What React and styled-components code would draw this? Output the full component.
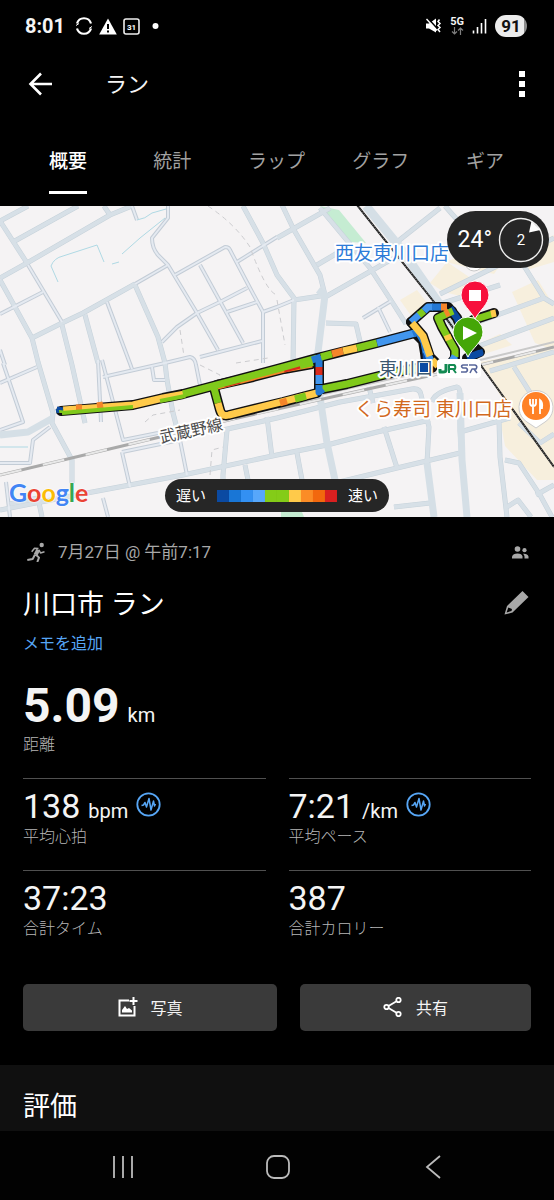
import React from "react";
import styled, { createGlobalStyle } from "styled-components";

const GlobalStyle = createGlobalStyle`
  * { box-sizing: border-box; }
  body {
    margin: 0;
    background: #000;
    color: #f4f4f4;
    font-family: Roboto, "Noto Sans CJK JP", sans-serif;
  }
  svg { display: block; flex: none; }
  button { font: inherit; color: inherit; border: 0; padding: 0; background: none; cursor: pointer; }
  h1, h2, p, dl, dd, dt { margin: 0; font-weight: inherit; }
`;

const Screen = styled.div`
  display: flex;
  flex-direction: column;
  min-height: 100vh;
`;

const StatusBar = styled.div`
  display: flex;
  align-items: center;
  justify-content: space-between;
  height: 52px;
  padding: 0 27px 0 25px;
`;

const StatusGroup = styled.div`
  display: flex;
  align-items: center;
  gap: ${(p) => p.$gap}px;
`;

const Clock = styled.span`
  font-size: 20px;
  font-weight: 700;
  line-height: 24px;
  margin-right: 4px;
`;

const Network = styled.div`
  display: flex;
  flex-direction: column;
  align-items: center;
  font-size: 11px;
  font-weight: 700;
  line-height: 10px;
`;

const Battery = styled.span`
  width: 32px;
  height: 22px;
  border-radius: 11px;
  background: linear-gradient(90deg, #ececec 91%, #8d8d8d 91%);
  color: #111;
  font-size: 17px;
  font-weight: 700;
  line-height: 22px;
  text-align: center;
`;

const AppBar = styled.header`
  display: flex;
  align-items: center;
  height: 64px;
  padding: 0 22px 0 28px;
`;

const AppTitle = styled.h1`
  flex: 1;
  margin-left: 52px;
  padding-top: 2px;
  font-size: 22px;
  line-height: 28px;
`;

const IconButton = styled.button`
  display: flex;
  align-items: center;
  justify-content: center;
`;

const Tabs = styled.nav`
  display: grid;
  grid-template-columns: repeat(5, 1fr);
  padding: 34px 17px 12px 16px;
`;

const Tab = styled.button`
  justify-self: center;
  padding-bottom: 17px;
  border-bottom: 3px solid ${(p) => (p.$active ? "#fff" : "transparent")};
  color: ${(p) => (p.$active ? "#fff" : "#a2a2a2")};
  font-size: 19px;
  font-weight: ${(p) => (p.$active ? 500 : 400)};
  line-height: 24px;
`;

const MapPanel = styled.section`
  position: relative;
  background: #f5f3f4;
`;

const MapDrawing = styled.svg`
  width: 100%;
  height: auto;
`;

const MapLabels = styled.g`
  font-family: Roboto, "Noto Sans CJK JP", sans-serif;
  paint-order: stroke;
  stroke: #fff;
  stroke-width: 4px;
  stroke-linejoin: round;
`;

const WeatherPill = styled.div`
  position: absolute;
  top: 5px;
  right: 5px;
  display: flex;
  align-items: center;
  gap: 6px;
  height: 57px;
  padding: 0 5px 0 11px;
  border-radius: 29px;
  background: #262626;
  color: #fff;
  font-size: 23px;
`;

const LegendPill = styled.div`
  position: absolute;
  bottom: 5px;
  left: 50%;
  transform: translateX(-50%);
  display: flex;
  align-items: center;
  gap: 11px;
  height: 33px;
  padding: 0 11px;
  border-radius: 17px;
  background: #262626;
  color: #fff;
  font-size: 15px;
  line-height: 20px;
  white-space: nowrap;
`;

const Scale = styled.div`
  display: flex;
`;

const Swatch = styled.span`
  width: 12px;
  height: 12px;
  background: ${(p) => p.$color};
`;

const GoogleLogo = styled.div`
  position: absolute;
  left: 9px;
  bottom: 9px;
  font-family: Lato, sans-serif;
  font-size: 25px;
  font-weight: 700;
  line-height: 32px;
  text-shadow: 0 0 2px #fff, 0 0 2px #fff;
`;

const Letter = styled.span`
  color: ${(p) => p.$color};
`;

const Summary = styled.main`
  padding: 23px 23px 34px;
`;

const MetaRow = styled.div`
  display: flex;
  align-items: center;
  height: 24px;
  padding: 0 2px 0 3px;
  color: #a8a8a8;
  font-size: 17px;
`;

const MetaText = styled.span`
  flex: 1;
  margin-left: 12px;
  line-height: 24px;
`;

const TitleRow = styled.div`
  display: flex;
  align-items: center;
  justify-content: space-between;
  height: 36px;
  margin-top: 22px;
`;

const ActivityTitle = styled.h2`
  padding-top: 2px;
  font-size: 27px;
  line-height: 36px;
  color: #fff;
`;

const NoteLink = styled.a`
  display: block;
  width: max-content;
  margin-top: 12px;
  color: #57a6f5;
  font-size: 16px;
  line-height: 20px;
  text-decoration: none;
`;

const Distance = styled.dl`
  display: flex;
  flex-direction: column-reverse;
  margin-top: 28px;
`;

const StatLabel = styled.dt`
  margin-top: ${(p) => (p.$large ? 5 : 4)}px;
  color: #b6b6b6;
  font-size: 16px;
  font-weight: 300;
  line-height: 20px;
`;

const StatValue = styled.dd`
  display: flex;
  align-items: baseline;
  gap: 8px;
  height: ${(p) => (p.$large ? 48 : 34)}px;
  font-size: ${(p) => (p.$large ? 48 : 34)}px;
  font-weight: ${(p) => (p.$large ? 700 : 400)};
  line-height: ${(p) => (p.$large ? 48 : 34)}px;
`;

const Unit = styled.span`
  font-size: 20px;
  font-weight: 400;
  line-height: 20px;
`;

const StatIcon = styled.span`
  align-self: flex-start;
  padding-top: 3px;
`;

const StatGrid = styled.dl`
  display: grid;
  grid-template-columns: 1fr 1fr;
  gap: 23px;
  margin-top: 23px;
`;

const Stat = styled.div`
  display: flex;
  flex-direction: column-reverse;
  padding-top: 10px;
  border-top: 1px solid #505050;
`;

const Actions = styled.div`
  display: grid;
  grid-template-columns: 11fr 10fr;
  gap: 23px;
  margin-top: 45px;
`;

const ActionButton = styled.button`
  display: flex;
  align-items: center;
  justify-content: center;
  gap: 13px;
  height: 47px;
  padding-bottom: 2px;
  border-radius: 5px;
  background: #3a3a3a;
  font-size: 16px;
`;

const RatingSection = styled.section`
  padding: 22px 23px 6px;
  background: #101010;
`;

const SystemNav = styled.nav`
  display: grid;
  grid-template-columns: repeat(3, 1fr);
  flex: 1;
  min-height: 69px;
  padding: 3px 44px 0 46px;
  background: #020202;
`;

const legendColors = ["#0b4aa2", "#1976d6", "#3390f2", "#57a7fb", "#84cc18", "#84cc18", "#ffca4a", "#fb8c26", "#f2680e", "#d92020"];
const C = { navy: "#0b4aa2", blue: "#2478d4", sky: "#4296ee", green: "#80c91b", yellow: "#ffca4a", orange: "#f5852a", red: "#d92b1d" };

const wideRoads = [
  "M0 221L28 206", "M0 278L27 263L110 215L132 206", "M0 221L27 263", "M13 242L67 212L78 206", "M104 206L110 215",
  "M0 280L15 307L32 338L38 362L53 413L52 423L72 460L72 483", "M32 338L62 323L83 313L135 284", "M62 325L72 365L85 423",
  "M85 315L98 363", "M135 285L158 337L165 363L167 380L173 413L180 440", "M243 206L263 243L277 275L294 298L293 365",
  "M0 435L28 432L53 418", "M0 510L87 493L183 475L277 455L327 445L377 432L430 420",
  "M223 430L277 418L340 402L412 389Q420 388 421 395L429 427L427 463L434 517", "M227 430L223 475L223 480",
  "M245 465L248 480", "M267 417L272 457", "M282 205L294 230L320 275L325 295L318 352L320 397L327 443L335 480",
  "M277 238L330 208", "M317 265L339 252", "M320 208L370 268L394 305L406 324", "M327 296L385 263L405 252", "M294 300L327 295",
  "M384 427L397 468", "M335 483L397 468L460 453", "M432 402Q434 392 457 387Q460 388 460 393L460 430L462 460L467 517",
  "M460 432L510 418", "M499 420L500 457L507 517", "M505 460L519 463L540 495L552 517", "M507 507L518 500L531 517",
  "M536 495L554 485", "M394 507L430 503", "M297 453L302 480", "M326 323L356 324L362 350", "M369 387L373 403",
  "M397 242L440 208", "M440 294L554 238", "M440 304L500 285", "M524 266L544 298L554 304", "M470 325L544 298", "M476 347L554 318",
  "M490 371L554 352", "M514 367L531 394", "M519 423L540 443L554 434", "M445 206L475 240", "M38 498L42 517", "M10 504L38 498",
];
const thinRoads = [
  "M28 265L62 322", "M0 314L43 292", "M107 302L132 369", "M135 284L168 265", "M162 342L177 327L197 313L220 302L247 288",
  "M168 206L168 218L152 238Q152 248 158 255L168 265L197 313L218 350", "M132 206L137 220", "M175 275L225 247Q229 247 230 250L250 288L263 312L263 363",
  "M200 265L243 343", "M200 357L262 341", "M227 312L257 302", "M237 262L277 237", "M263 312L277 307L294 300", "M165 363L190 357Q195 358 196 365L200 385",
  "M0 463L30 463L33 440L50 427", "M0 383L37 367", "M3 363L23 422L0 430", "M103 377L165 363", "M102 360L123 440L158 433",
  "M122 452L180 440L187 475", "M122 452L130 487", "M6 482L10 517", "M103 498L108 517", "M0 350L5 365", "M152 367L154 380L165 380",
  "M98 360L101 422", "M363 318L391 301", "M378 307L390 332",
];
const water = ["M58 282L51 266Q54 258 63 256L97 245L104 262M112 264L119 262", "M165 218L140 238L122 254M137 220Q145 219 152 213L166 209", "M0 447L28 447"];
const footpaths = ["M208 206Q235 224 250 247Q266 292 277 295", "M180 330L184 356", "M236 363L268 358", "M277 300L285 345", "M145 422L153 415L180 410", "M210 475L212 450L223 447", "M200 365L220 375L215 385"];
const sheds = ["M400 300L417 290L432 309L414 320Z", "M430 283L447 262L475 281L460 296L444 292Z", "M446 262L486 245L507 255L494 274Z",
  "M512 292L538 280L554 306L554 350L535 343Z", "M510 255L554 235L554 262L527 270Z", "M474 346L500 334L512 345L484 354Z",
  "M480 362L554 348L554 480L537 480L505 446L501 424L512 415Z"];
const outlines = [
  "M61 411L133 405L163 398L183 394L213 386L277 369L317 358L377 343L415 333", "M217 385L253 377L284 369L312 364",
  "M214 388L220 410Q222 417 229 415L283 402L317 393", "M319 360L319 390", "M322 389L347 384L387 374L417 368L432 368",
  "M411 322L428 307L448 307L457 318L466 340L480 352L467 358", "M411 322L423 336L430 357L438 365L450 365L455 358L455 350L442 327L438 318L452 311",
  "M415 333L423 341L425 353L427 370", "M473 320L494 313",
];
const segments = [
  ["yellow", "M63 410L133 405L163 398L185 394"], ["orange", "M76 408L82 408M97 406L103 405"],
  ["green", "M183 394L213 386L277 369L317 358"],
  ["green", "M214 388L218 403"], ["yellow", "M218 403L220 410Q222 417 229 415L317 393"],
  ["orange", "M280 403L287 401"], ["green", "M295 399L306 396"],
  ["green", "M322 389L347 384L387 374L420 368"],
  ["blue", "M312 360L321 357M319 356L319 367"], ["red", "M319 367L319 375"], ["sky", "M319 375L319 384"], ["blue", "M319 385L319 392L323 389"],
  ["green", "M321 357L332 354"], ["orange", "M332 354L343 351"], ["yellow", "M343 351L357 348"], ["green", "M357 348L377 343"],
  ["sky", "M377 343L415 333"],
  ["blue", "M413 334L418 332L424 342L426 353"], ["navy", "M426 353L427 370"],
  ["sky", "M411 322L420 314"], ["green", "M419 315L424 311"], ["sky", "M424 311L428 307L433 307"], ["blue", "M432 307L442 307"], ["orange", "M441 307L447 307"], ["navy", "M450 308L457 318L466 340"], ["navy", "M479 350L480 353L467 358"],
  ["sky", "M426 350L431 361"], ["yellow", "M412 323L423 336L430 356M432 360L438 366"],
  ["green", "M453 311L438 318L442 327L455 350L455 357"], ["sky", "M455 356L450 365"], ["orange", "M445 314L449 312"], ["yellow", "M447 335L449 340"],
  ["green", "M473 320L492 314"], ["yellow", "M491 314L496 313"],
];

function RunMap() {
  return (
    <MapDrawing viewBox="0 206 554 311" role="img" aria-label="コース">
      <g fill="#f7efdd">{sheds.map((d) => <path key={d} d={d} />)}</g>
      <path d="M320 206L339 210L366 243L350 242Z" fill="#c5ecd2" />
      <path d="M281 512L302 512L304 517L281 517Z" fill="#c5ecd2" />
      <g fill="none" strokeLinejoin="round">
        <g stroke="#c6d2da" strokeWidth="5">{wideRoads.map((d) => <path key={d} d={d} />)}</g>
        <g stroke="#c3ccd6" strokeWidth="4">{thinRoads.map((d) => <path key={d} d={d} />)}</g>
        <path d="M366 206L402 250L440 305L467 344" stroke="#d5dfe6" strokeWidth="9" />
        <g stroke="#d7e0e7" strokeWidth="4">{wideRoads.map((d) => <path key={d} d={d} />)}</g>
        <g stroke="#e5eaf1" strokeWidth="2">{thinRoads.map((d) => <path key={d} d={d} />)}</g>
        <path d="M318 290L325 295L318 352L320 397L327 443L335 480M427 463L434 517M460 393L462 460L467 517M0 435L28 432L53 418" stroke="#d5dfe6" strokeWidth="7" />
        <g stroke="#afd9e4" strokeWidth="1">{water.map((d) => <path key={d} d={d} />)}</g>
        <g stroke="#cccccf" strokeWidth="1" strokeDasharray="5 4">{footpaths.map((d) => <path key={d} d={d} />)}</g>
        <path d="M0 475L160 437L233 419L377 387L480 365L554 347" stroke="#a9a9a9" strokeWidth="3" />
        <path d="M0 475L160 437L233 419L377 387L480 365L554 347" stroke="#e8e8e8" strokeWidth="2" strokeDasharray="22 22" />
        <path d="M215 419L377 382L480 360L554 342" stroke="#c9c9c9" strokeWidth="2" />
        <path d="M357 205L434 302L477 360L554 467" stroke="#222" strokeWidth="2" />
        <path d="M357 205L434 302L477 360L554 467" stroke="#999" strokeWidth="1" strokeDasharray="1 2" />
      </g>

      <g fill="none" strokeLinejoin="round">
        <g stroke="#111" strokeWidth="10" strokeLinecap="round">{outlines.map((d) => <path key={d} d={d} />)}</g>
        <path d="M217 386L253 377L284 369L312 364" stroke={C.orange} strokeWidth="7" />
        <path d="M224 385L240 381M284 370L300 366" stroke={C.red} strokeWidth="5" />
        <path d="M300 366L313 363" stroke={C.green} strokeWidth="6" />
        <g strokeWidth="7">{segments.map(([c, d]) => <path key={d} d={d} stroke={C[c]} />)}</g>
        <path d="M62 413L133 407M160 401L185 396" stroke={C.green} strokeWidth="4" />
        <path d="M60 409L60 413" stroke={C.green} strokeWidth="7" />
        <path d="M57 408L63 409M57 409L58 413" stroke={C.navy} strokeWidth="3" />
      </g>

      <MapLabels>
        <text x="335" y="260" fontSize="19" fill="#2d7bd8">西友東川口店</text>
        <text x="355" y="416" fontSize="19" fill="#d2691e">くら寿司 東川口店</text>
        <text x="161" y="443" fontSize="16" fill="#4c4c4c" transform="rotate(-12 161 443)">武蔵野線</text>
        <text x="379" y="375" fontSize="18" fill="#3c5872">東川口</text>
      </MapLabels>
      <rect x="420" y="363" width="8" height="9" fill={C.navy} />
      <rect x="437" y="359" width="44" height="19" rx="4" fill="#fff" />
      <g fill="none" strokeLinejoin="round">
        <path d="M446 364V370Q446 372 443 372H440V369" stroke="#128a52" strokeWidth="3" />
        <path d="M449 373V365H454Q456 366 455 369H450M453 369L456 373" stroke="#128a52" strokeWidth="2" />
        <path d="M468 365H463Q460 366 463 368H466Q469 370 466 372H461M470 373L472 369H476Q478 366 475 365H469M474 369L477 373" stroke="#58679b" strokeWidth="1.6" />
      </g>

      <circle cx="474" cy="262" r="9" fill="#fff" stroke="#c8c8c8" />
      <path d="M475 319C471 311 461 304 461 295A14 14 0 0 1 489 295C489 304 479 311 475 319Z" fill="#f7103c" stroke="#fff" strokeWidth="1" />
      <rect x="469" y="290" width="12" height="11" fill="#fff" />
      <path d="M468 357C464 348 453 342 453 332A15 15 0 0 1 483 332C483 342 472 348 468 357Z" fill="#45a607" stroke="#fff" strokeWidth="1" />
      <path d="M463 326L477 333L463 340Z" fill="#fff" />
      <path d="M536 428L527 422A17 17 0 1 1 545 422Z" fill="#fff" stroke="#ccc" />
      <circle cx="536" cy="406" r="14" fill="#ff8126" />
      <g fill="none" stroke="#fff" strokeWidth="1.8">
        <path d="M530 399V403Q530 406 533 406Q536 406 536 403V399M533 399V414" />
        <path d="M540 414V400Q543 402 542 408H540" fill="#fff" />
      </g>
    </MapDrawing>
  );
}

const RunnerIcon = () => (
  <svg width="20" height="20" viewBox="0 0 20 20" fill="none" stroke="#a8a8a8" strokeLinejoin="round">
    <circle cx="15.7" cy="3" r="2.2" fill="#a8a8a8" stroke="none" />
    <path d="M12.3 7.8L9.6 12.8" strokeWidth="4" />
    <path d="M13 7.800L14.500 11L18.500 9.800M12.500 6.500L8.500 6.300L5.700 9.800" strokeWidth="1.500" />
    <path d="M9.800 12.500L13 15.600L11.300 20M9 12.500L6.700 17L1.300 18" strokeWidth="2" />
  </svg>
);

const PulseIcon = () => (
  <svg width="25" height="25" viewBox="0 0 25 25" fill="none" stroke="#57a6f5">
    <circle cx="12.5" cy="12.5" r="11.2" strokeWidth="1.8" />
    <path d="M5.500 13.500L7.500 13L9 10.500L10.500 15L13 6.500L15 18L17.500 9L18.500 14L19.500 12" strokeWidth="1.500" strokeLinejoin="round" />
  </svg>
);

function StatItem({ value, unit, label, pulse }) {
  return (
    <Stat>
      <StatLabel>{label}</StatLabel>
      <StatValue>
        {value}
        {unit && <Unit>{unit}</Unit>}
        {pulse && <StatIcon><PulseIcon /></StatIcon>}
      </StatValue>
    </Stat>
  );
}

export default function App() {
  return (
    <Screen>
      <GlobalStyle />
      <StatusBar>
        <StatusGroup $gap={6}>
          <Clock>8:01</Clock>
          <svg width="18" height="18" viewBox="0 0 18 18" fill="none" stroke="#fff" strokeWidth="2.2">
            <path d="M2 6.500A7.300 7.300 0 0 1 16 6.500M2 11.500A7.300 7.300 0 0 0 16 11.500" />
            <path d="M1 8.500L4 6.500M17 9.500L14 11.500" strokeWidth="1" />
          </svg>
          <svg width="18" height="17" viewBox="0 0 18 17">
            <path d="M9 .5L17.800 16.500H.2Z" fill="#fff" />
            <path d="M9 6V11M9 12.500V14.500" stroke="#000" strokeWidth="2" />
          </svg>
          <svg width="17" height="17" viewBox="0 0 17 17">
            <rect x="1" y="1" width="15" height="15" rx="2" fill="none" stroke="#eee" strokeWidth="1.6" />
            <text x="8.5" y="11.5" textAnchor="middle" fontFamily="Roboto, sans-serif" fontSize="8" fontWeight="700" fill="#fff">31</text>
          </svg>
          <svg width="19" height="6" viewBox="0 0 19 6"><circle cx="9.5" cy="3" r="3" fill="#fff" /></svg>
        </StatusGroup>
        <StatusGroup $gap={8}>
          <svg width="17" height="16" viewBox="0 0 17 16">
            <path d="M1 5.5H4L11 .5V14.5L4 10.5H1Z" fill="#fff" />
            <path d="M2.500 0L13 11.500" stroke="#000" strokeWidth="1.800" />
            <path d="M1.500 1L12 12.500" stroke="#fff" strokeWidth="1.400" />
            <path d="M14.5 1.5L13 3.5L15 5.5L13 7.5L15 9.5L13 11.5L15 14" stroke="#fff" strokeWidth="1.5" fill="none" />
          </svg>
          <Network>
            5G
            <svg width="13" height="8" viewBox="0 0 13 8" fill="none" stroke="#7d7d7d" strokeWidth="1.2">
              <path d="M3.5 0V7M1 4.5L3.5 7L6 4.5M9.5 8V1M7 3.5L9.5 1L12 3.5" />
            </svg>
          </Network>
          <svg width="15" height="16" viewBox="0 0 15 16" stroke="#fff" strokeWidth="1.6">
            <path d="M1.5 12.5V15.5M5.5 9V15.5M9.5 5V15.5M13.5 1V15.5" />
          </svg>
          <Battery>91</Battery>
        </StatusGroup>
      </StatusBar>

      <AppBar>
        <IconButton aria-label="戻る">
          <svg width="25" height="24" viewBox="0 0 25 24" fill="none" stroke="#fff" strokeWidth="2.6">
            <path d="M24 12H3M13 1.5L2.5 12L13 22.5" />
          </svg>
        </IconButton>
        <AppTitle>ラン</AppTitle>
        <IconButton aria-label="メニュー">
          <svg width="20" height="28" viewBox="0 0 20 28" fill="#fff">
            <path d="M7 1H13V7H7ZM7 11H13V17H7ZM7 21H13V27H7Z" />
          </svg>
        </IconButton>
      </AppBar>

      <Tabs>
        {["概要", "統計", "ラップ", "グラフ", "ギア"].map((name, i) => (
          <Tab key={name} $active={i === 0}>{name}</Tab>
        ))}
      </Tabs>

      <MapPanel>
        <RunMap />
        <WeatherPill>
          24°
          <svg width="46" height="46" viewBox="0 0 46 46">
            <circle cx="23" cy="23" r="21.5" fill="none" stroke="#eee" strokeWidth="1.4" />
            <path d="M33.500 4L31 15.500L42.500 13Z" fill="#fff" />
            <text x="23" y="28" textAnchor="middle" fontSize="15" fontFamily="Roboto, sans-serif" fill="#fff">2</text>
          </svg>
        </WeatherPill>
        <GoogleLogo>
          <Letter $color="#4285f4">G</Letter><Letter $color="#ea4335">o</Letter><Letter $color="#fbbc05">o</Letter><Letter $color="#4285f4">g</Letter><Letter $color="#34a853">l</Letter><Letter $color="#ea4335">e</Letter>
        </GoogleLogo>
        <LegendPill>
          遅い
          <Scale>{legendColors.map((c, i) => <Swatch key={i} $color={c} />)}</Scale>
          速い
        </LegendPill>
      </MapPanel>

      <Summary>
        <MetaRow>
          <RunnerIcon />
          <MetaText>7月27日 @ 午前7:17</MetaText>
          <svg width="17" height="13" viewBox="0 0 17 13" fill="#a8a8a8">
            <circle cx="5.5" cy="3" r="2.8" />
            <path d="M0 12.5V10.5Q1 7.5 5.5 7.5Q10 7.5 10.5 10.5V12.5Z" />
            <circle cx="12.5" cy="4.2" r="2.1" />
            <path d="M11 7.7Q15.500 7.300 16.500 10.500V12.500H12.500V10.500Q12.300 8.700 11 7.700Z" />
          </svg>
        </MetaRow>
        <TitleRow>
          <ActivityTitle>川口市 ラン</ActivityTitle>
          <IconButton aria-label="編集">
            <svg width="28" height="26" viewBox="0 0 28 26" fill="#a8a8a8">
              <path d="M19.500 0L25.500 6L9.500 21.500L1.500 23.500L4 15ZM5.300 16.500L3.600 21.400L8.500 20L9 18Z" fillRule="evenodd" />
            </svg>
          </IconButton>
        </TitleRow>
        <NoteLink href="#note">メモを追加</NoteLink>

        <Distance>
          <StatLabel $large>距離</StatLabel>
          <StatValue $large>5.09<Unit>km</Unit></StatValue>
        </Distance>

        <StatGrid>
          <StatItem value="138" unit="bpm" label="平均心拍" pulse />
          <StatItem value="7:21" unit="/km" label="平均ペース" pulse />
          <StatItem value="37:23" label="合計タイム" />
          <StatItem value="387" label="合計カロリー" />
        </StatGrid>

        <Actions>
          <ActionButton>
            <svg width="20" height="20" viewBox="0 0 20 20" fill="none" stroke="#fff" strokeWidth="2">
              <path d="M11 3.500H1.500V18.500H16.500V9M15.500 0V8M11.500 4H19.500" />
              <path d="M4 15.500V13L7 9L9 12L11 11L14 13.500V15.500Z" fill="#fff" stroke="none" />
            </svg>
            写真
          </ActionButton>
          <ActionButton>
            <svg width="20" height="20" viewBox="0 0 20 20" fill="none" stroke="#fff" strokeWidth="1.8">
              <circle cx="3.500" cy="10" r="2.200" /><circle cx="15.500" cy="3" r="2.200" /><circle cx="15.500" cy="17" r="2.200" />
              <path d="M5.500 9L13.500 4.200M5.500 11L13.500 15.800" />
            </svg>
            共有
          </ActionButton>
        </Actions>
      </Summary>

      <RatingSection>
        <ActivityTitle>評価</ActivityTitle>
      </RatingSection>

      <SystemNav>
        <IconButton aria-label="履歴">
          <svg width="24" height="24" viewBox="0 0 24 24" stroke="#bbb" strokeWidth="1.800"><path d="M3 1V23M12 1V23M21 1V23" /></svg>
        </IconButton>
        <IconButton aria-label="ホーム">
          <svg width="24" height="24" viewBox="0 0 24 24" fill="none" stroke="#bbb" strokeWidth="1.800"><rect x="1" y="1" width="22" height="22" rx="7" /></svg>
        </IconButton>
        <IconButton aria-label="戻る">
          <svg width="24" height="24" viewBox="0 0 24 24" fill="none" stroke="#bbb" strokeWidth="1.800"><path d="M19 1L6 12L19 23" /></svg>
        </IconButton>
      </SystemNav>
    </Screen>
  );
}
